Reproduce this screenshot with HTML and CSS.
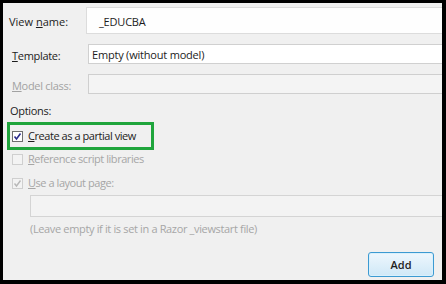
FILE: index.html
```html
<!DOCTYPE html>
<html>
<head>
<meta charset="utf-8">
<link rel="stylesheet" href="styles.css">
</head>
<body>
<div class="dialog">
  <div class="row row-name">
    <label class="lbl"><span>View <u>n</u>ame:</span></label>
    <div class="field field-name">_EDUCBA</div>
  </div>
  <div class="row row-tpl">
    <label class="lbl"><span><u>T</u>emplate:</span></label>
    <div class="field field-tpl">Empty (without model)</div>
  </div>
  <div class="row row-model">
    <label class="lbl disabled"><span><u>M</u>odel class:</span></label>
    <div class="field field-model"></div>
  </div>
  <div class="options">Options:</div>
  <div class="highlight">
    <div class="check-row">
      <span class="cb checked">
        <svg viewBox="0 0 11 11" width="11" height="11"><path d="M2.5 5.5 L4.5 8 L8.5 2.5" fill="none" stroke="#2b2b8c" stroke-width="1.6"/></svg>
      </span>
      <span class="ctext"><u>C</u>reate as a partial view</span>
    </div>
  </div>
  <div class="check-row disabled row-ref">
    <span class="cb"></span>
    <span class="ctext"><u>R</u>eference script libraries</span>
  </div>
  <div class="check-row disabled row-layout">
    <span class="cb">
      <svg viewBox="0 0 11 11" width="11" height="11"><path d="M2.5 5.5 L4.5 8 L8.5 2.5" fill="none" stroke="#b8b8b8" stroke-width="1.4"/></svg>
    </span>
    <span class="ctext"><u>U</u>se a layout page:</span>
  </div>
  <div class="field field-layout"></div>
  <div class="hint">(Leave empty if it is set in a Razor _viewstart file)</div>
  <div class="actions">
    <button class="btn">Add</button>
  </div>
</div>
</body>
</html>
```
FILE: styles.css
```css
html, body {
  margin: 0;
  padding: 0;
  background: #000;
}
body {
  width: 446px;
  height: 284px;
  overflow: hidden;
  padding-top: 3px;
  padding-left: 3px;
  box-sizing: border-box;
}
.dialog {
  width: 439px;
  height: 277px;
  background: #f0f0f0;
  overflow: hidden;
  font-family: "Open Sans", "Liberation Sans", sans-serif;
  font-size: 11px;
  line-height: 16px;
  color: #1c1c1c;
  display: flex;
  flex-direction: column;
}
u {
  text-decoration: underline;
  text-underline-offset: 1px;
}
.row {
  display: flex;
  align-items: center;
  padding-left: 6px;
}
.lbl {
  width: 77px;
  flex: none;
  padding-top: 3px;
  letter-spacing: -0.3px;
}
.row-name .lbl {
  letter-spacing: 0;
}
.row-tpl .lbl, .row-model .lbl {
  width: 79px;
  box-sizing: border-box;
  padding-left: 3px;
}
.lbl.disabled {
  color: #a2a2a2;
}
.field {
  flex: 1;
  margin-right: -10px;
  background: #fff;
  border: 1px solid #d9d9d9;
  box-sizing: border-box;
  display: flex;
  align-items: center;
  letter-spacing: -0.2px;
}
.row-name {
  margin-top: 4px;
}
.field-name {
  height: 27px;
  padding-left: 12px;
  padding-top: 3px;
  background: #fefefe;
  border-color: #dcdcdc;
}
.row-tpl {
  margin-top: 10px;
}
.field-tpl {
  height: 20px;
  padding-left: 3px;
  padding-top: 2px;
  border-color: #d0d0d0;
}
.row-model {
  margin-top: 10px;
}
.field-model {
  height: 20px;
  background: #f4f4f4;
  border-color: #cfcfcf;
}
.options {
  margin-top: 9px;
  padding-left: 7px;
  letter-spacing: -0.3px;
}
.highlight {
  margin-top: 3px;
  margin-left: 4px;
  width: 147px;
  height: 28px;
  box-sizing: border-box;
  border: 3px solid #1fa53c;
  display: flex;
  align-items: center;
}
.check-row {
  display: flex;
  align-items: center;
}
.ctext {
  letter-spacing: -0.45px;
}
.highlight .check-row {
  padding-left: 2px;
}
.cb {
  width: 11px;
  height: 11px;
  box-sizing: border-box;
  border: 1px solid #6e6e6e;
  background: #fff;
  flex: none;
  margin-right: 5px;
  display: flex;
}
.cb svg {
  margin: -1px;
}
.disabled {
  color: #a6a6a6;
}
.disabled .cb {
  border-color: #cfcfcf;
  background: #f3f3f3;
}
.row-ref {
  margin-top: 1px;
  padding-left: 9px;
}
.row-layout {
  margin-top: 8px;
  padding-left: 9px;
}
.field-layout {
  flex: none;
  margin-left: 27px;
  margin-top: 4px;
  height: 22px;
  width: 430px;
  background: #f3f3f3;
  border-color: #d4d4d4;
}
.hint {
  margin-top: 4px;
  padding-left: 27px;
  color: #a6a6a6;
  letter-spacing: -0.35px;
}
.actions {
  display: flex;
  justify-content: flex-end;
  padding-right: 8px;
  margin-top: 15px;
}
.btn {
  width: 66px;
  height: 25px;
  border: 1px solid #3c9ad2;
  border-radius: 3px;
  background: linear-gradient(#eef7fd, #cfe8f7);
  box-shadow: inset 0 0 0 1px #d9f0fc;
  font-family: "Open Sans", "Liberation Sans", sans-serif;
  font-size: 11px;
  font-weight: 600;
  color: #1e1e1e;
  padding: 0;
}
```
